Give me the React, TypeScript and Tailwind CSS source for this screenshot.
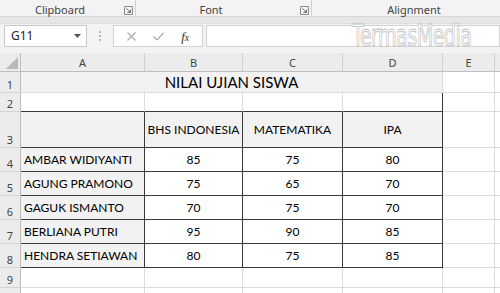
import React from "react";

const names = ["AMBAR WIDIYANTI", "AGUNG PRAMONO", "GAGUK ISMANTO", "BERLIANA PUTRI", "HENDRA SETIAWAN"];
const bv = [85, 75, 70, 95, 80];
const cv = [75, 65, 75, 90, 75];
const dv = [80, 70, 70, 85, 85];

function Launcher() {
  return (
    <svg width="9" height="9" viewBox="0 0 9 9" className="block">
      <path d="M0.5 0.5 H8.5 V8.5 H0.5 Z" fill="none" stroke="#8a8a8a" strokeWidth="1" />
      <path d="M2.5 2.5 L6.5 6.5 M6.5 3.5 V6.5 H3.5" fill="none" stroke="#6a6a6a" strokeWidth="1" />
    </svg>
  );
}

const rowHead = "flex items-end justify-center pb-[2px] bg-[#ececec] border-r border-b border-r-[#bdbdbd] border-b-[#d4d4d4] text-[11px] text-[#444] font-['Noto_Sans',sans-serif] leading-none";
const lightCell = "bg-white border-r border-b border-[#dcdcdc]";
const darkCellWhite = "bg-white border-r border-b border-[#3a3a3a] flex items-center justify-center text-[12px] text-black font-['Lato',sans-serif] whitespace-nowrap";
const darkCellGray = "bg-[#f2f2f2] border-r border-b border-[#3a3a3a] flex items-center text-[12px] text-black font-['Lato',sans-serif] whitespace-nowrap overflow-hidden";

export default function App() {
  return (
    <div className="w-[500px] h-[293px] overflow-hidden bg-[#f3f3f3] relative select-none">
      {/* Ribbon group labels */}
      <div className="h-[17px] flex bg-[#f3f3f3] border-b border-[#d6d6d6] text-[11px] text-[#444] font-['Noto_Sans',sans-serif] leading-none">
        <div className="w-[136px] shrink-0 flex items-center pt-[3px] border-r border-[#d0d0d0] relative">
          <div className="w-[120px] text-center">Clipboard</div>
          <div className="absolute left-[124px] top-[6px]"><Launcher /></div>
        </div>
        <div className="w-[176px] shrink-0 flex items-center pt-[3px] border-r border-[#d0d0d0] relative">
          <div className="w-[150px] text-center">Font</div>
          <div className="absolute left-[164px] top-[6px]"><Launcher /></div>
        </div>
        <div className="w-[204px] shrink-0 flex items-center pt-[3px]">
          <div className="w-[204px] text-center">Alignment</div>
        </div>
      </div>
      {/* band */}
      <div className="h-[7px] bg-[#e6e6e6] border-b border-[#dedede]"></div>
      {/* formula bar */}
      <div className="h-[28px] flex items-start pt-[1px] bg-[#f3f3f3] relative">
        <div className="ml-[4px] w-[83px] h-[22px] bg-white border border-[#c8c8c8] flex items-center justify-between pl-[6px] pr-[5px] text-[12px] text-[#222] font-['Noto_Sans',sans-serif]">
          <span>G11</span>
          <svg width="7" height="4" viewBox="0 0 7 4"><path d="M0 0 H7 L3.5 4 Z" fill="#555" /></svg>
        </div>
        <div className="w-[26px] h-[22px] flex flex-col items-center justify-center gap-[2px]">
          <div className="w-[2px] h-[2px] bg-[#b5b5b5]"></div>
          <div className="w-[2px] h-[2px] bg-[#b5b5b5]"></div>
          <div className="w-[2px] h-[2px] bg-[#b5b5b5]"></div>
        </div>
        <div className="w-[90px] h-[22px] bg-white border border-[#d2d2d2] flex items-center justify-around px-[4px]">
          <svg width="9" height="9" viewBox="0 0 9 9"><path d="M0.5 0.5 L8.5 8.5 M8.5 0.5 L0.5 8.5" stroke="#a8a8a8" strokeWidth="1.1" /></svg>
          <svg width="11" height="9" viewBox="0 0 11 9"><path d="M0.5 4.5 L4 8 L10.5 0.8" fill="none" stroke="#a8a8a8" strokeWidth="1.2" /></svg>
          <span className="text-[13px] italic text-[#333] font-['Liberation_Serif',serif] leading-none">f<span className="text-[10px]">x</span></span>
        </div>
        <div className="ml-[3px] flex-1 h-[22px] bg-white border border-[#d2d2d2]"></div>
        <div className="absolute left-[352px] top-[-4px] text-[31px] leading-none text-white font-['DejaVu_Sans',sans-serif] tracking-[-1px] [-webkit-text-stroke:1px_#c4c4c4] scale-x-[0.62] origin-left whitespace-nowrap">TermasMedia</div>
      </div>
      {/* gap */}
      <div className="h-[1px] bg-[#f3f3f3]"></div>
      {/* sheet */}
      <div className="grid grid-cols-[21px_124px_98px_100px_100px_52px_40px] grid-rows-[19px_21px_19px_36px_24px_24px_24px_24px_24px_20px_20px] bg-white">
        {/* header row */}
        <div className="bg-[#ececec] border-r border-b border-r-[#bdbdbd] border-b-[#bdbdbd] relative">
          <svg width="12" height="12" viewBox="0 0 12 12" className="absolute right-[2px] bottom-[2px]"><path d="M12 0 V12 H0 Z" fill="#b8b8b8" /></svg>
        </div>
        {["A", "B", "C", "D", "E", "F"].map((c) => (
          <div key={c} className="bg-[#ececec] border-r border-b border-r-[#d0d0d0] border-b-[#bdbdbd] flex items-center justify-center text-[11px] text-[#444] font-['Noto_Sans',sans-serif] leading-none">
            {c === "F" ? "" : c}
          </div>
        ))}
        {/* row 1 */}
        <div className={rowHead}>1</div>
        <div className="col-span-4 bg-[#f2f2f2] border-r border-b border-[#dcdcdc] flex items-center justify-center text-[15px] text-black font-['Lato',sans-serif] leading-none pt-[1px] whitespace-nowrap">
          NILAI UJIAN SISWA
        </div>
        <div className={lightCell}></div>
        <div className={lightCell}></div>
        {/* row 2 */}
        <div className={rowHead}>2</div>
        <div className="bg-white border-r border-b border-r-[#dcdcdc] border-b-[#3a3a3a]"></div>
        <div className="bg-white border-r border-b border-r-[#dcdcdc] border-b-[#3a3a3a]"></div>
        <div className="bg-white border-r border-b border-r-[#dcdcdc] border-b-[#3a3a3a]"></div>
        <div className="bg-white border-r border-b border-r-[#3a3a3a] border-b-[#3a3a3a]"></div>
        <div className={lightCell}></div>
        <div className={lightCell}></div>
        {/* row 3 */}
        <div className={rowHead}>3</div>
        <div className={darkCellGray}></div>
        <div className={darkCellGray + " justify-center"}>BHS INDONESIA</div>
        <div className={darkCellGray + " justify-center"}>MATEMATIKA</div>
        <div className={darkCellGray + " justify-center"}>IPA</div>
        <div className={lightCell}></div>
        <div className={lightCell}></div>
        {names.map((n, i) => (
          <React.Fragment key={n}>
            <div className={rowHead}>{i + 4}</div>
            <div className={darkCellGray + " pl-[3px] pt-[1px]"}>{n}</div>
            <div className={darkCellWhite + " pt-[1px]"}>{bv[i]}</div>
            <div className={darkCellWhite + " pt-[1px]"}>{cv[i]}</div>
            <div className={darkCellWhite + " pt-[1px]"}>{dv[i]}</div>
            <div className={lightCell}></div>
            <div className={lightCell}></div>
          </React.Fragment>
        ))}
        {/* row 9 */}
        <div className={rowHead}>9</div>
        <div className={lightCell}></div>
        <div className={lightCell}></div>
        <div className={lightCell}></div>
        <div className={lightCell}></div>
        <div className={lightCell}></div>
        <div className={lightCell}></div>
        {/* row 10 */}
        <div className={rowHead}></div>
        <div className={lightCell}></div>
        <div className={lightCell}></div>
        <div className={lightCell}></div>
        <div className={lightCell}></div>
        <div className={lightCell}></div>
        <div className={lightCell}></div>
      </div>
    </div>
  );
}
